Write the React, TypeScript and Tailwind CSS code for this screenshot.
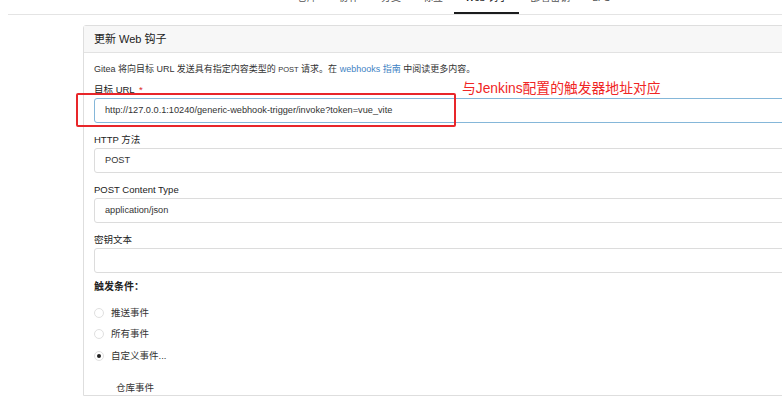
import React from "react";

const tabs = ["仓库", "协作", "分支", "标签", "Web 钩子", "部署密钥", "LFS"];

const Field = ({
  label,
  value,
  focused,
  required,
}: {
  label: string;
  value: string;
  focused?: boolean;
  required?: boolean;
}) => (
  <div className="mb-[10px]">
    <div className="h-[14px] leading-[14px] mb-[1px] text-[9.5px] text-[#222]">
      {label}
      {required && <span className="text-[#db2828] ml-[2px]">*</span>}
    </div>
    <div
      className={
        "h-[25px] flex items-center pl-[10px] text-[9.2px] text-[#333] bg-white rounded-[3px] border " +
        (focused ? "border-[#85b7d9]" : "border-[#dcdcdc]")
      }
    >
      {value}
    </div>
  </div>
);

const Radio = ({ label, checked }: { label: string; checked?: boolean }) => (
  <div className="flex items-center h-[21.5px] text-[9.5px] text-[#333]">
    <span className="w-[10px] h-[10px] rounded-full border border-[#e0e0e0] bg-white flex items-center justify-center mr-[7px]">
      {checked && <span className="w-[4px] h-[4px] rounded-full bg-[#222]" />}
    </span>
    {label}
  </div>
);

export default function App() {
  return (
    <div className="w-[782px] h-[398px] overflow-hidden bg-white font-['Liberation_Sans','Noto_Sans_CJK_SC',sans-serif]">
      <div className="-mt-[14px] ml-[8px] h-[29px] flex border-b border-[#e4e4e4] pl-[278px] text-[10px] text-[#555]">
        {tabs.map((t) => (
          <div
            key={t}
            className={
              "px-[11px] pt-[6px] leading-[12px] " +
              (t === "Web 钩子" ? "border-b-2 border-[#1b1c1d] text-[#111]" : "")
            }
          >
            {t}
          </div>
        ))}
      </div>

      <div className="relative ml-[83px] mt-[10px] w-[760px] border border-[#dedede] rounded-tl-[3px]">
        <div className="h-[27px] flex items-center px-[10px] bg-[#f7f7f7] border-b border-[#e2e2e2] text-[11px] text-[#222]">
          更新 Web 钩子
        </div>
        <div className="px-[10px] pt-[9px]">
          <div className="h-[14px] leading-[14px] mb-[7px] text-[9px] text-[#333]">
            Gitea 将向目标 URL 发送具有指定内容类型的 <span className="text-[7.5px]">POST</span> 请求。在{" "}
            <span className="text-[#4183c4]">webhooks 指南</span> 中阅读更多内容。
          </div>
          <Field
            label="目标 URL "
            required
            focused
            value="http://127.0.0.1:10240/generic-webhook-trigger/invoke?token=vue_vite"
          />
          <Field label="HTTP 方法" value="POST" />
          <Field label="POST Content Type" value="application/json" />
          <Field label="密钥文本" value="" />
          <div className="h-[14px] leading-[14px] mt-[-3px] mb-[8px] text-[10px] font-bold text-[#222]">
            触发条件：
          </div>
          <Radio label="推送事件" />
          <Radio label="所有事件" />
          <Radio label="自定义事件..." checked />
          <div className="pl-[22px] pt-[14px] text-[9.5px] text-[#333]">仓库事件</div>
        </div>

        <div className="absolute left-[-8px] top-[67px] w-[380px] h-[34px] border-2 border-[#e8262a] rounded-[2px]" />
        <div className="absolute left-[378px] top-[54px] text-[13.8px] leading-[18px] text-[#f02525]">
          与Jenkins配置的触发器地址对应
        </div>
      </div>
    </div>
  );
}
